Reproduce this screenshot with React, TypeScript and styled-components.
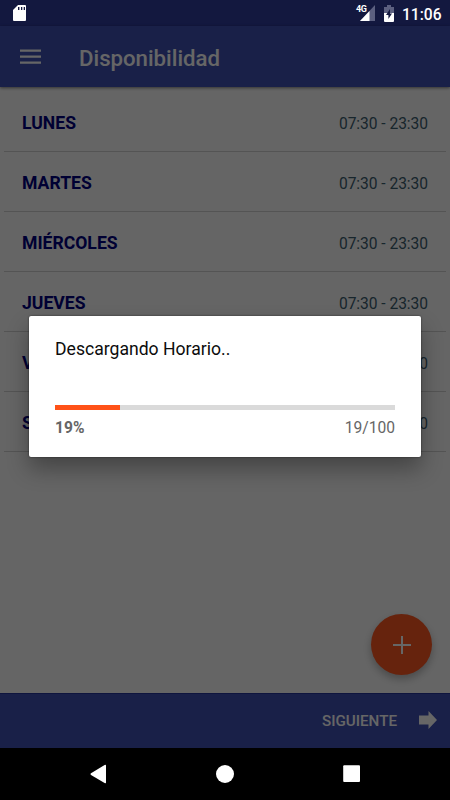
import React from "react";
import styled, { createGlobalStyle } from "styled-components";

const GlobalStyle = createGlobalStyle`
  * { box-sizing: border-box; }
  body { margin: 0; background: #000; font-family: Roboto, "Liberation Sans", sans-serif; }
`;

const Screen = styled.div`
  position: relative;
  width: 450px;
  height: 800px;
  overflow: hidden;
  display: flex;
  flex-direction: column;
`;

const StatusBackdrop = styled.div`
  height: 26px;
  flex: none;
  background: #303c9f;
`;

const AppBar = styled.header`
  height: 61px;
  flex: none;
  display: flex;
  align-items: center;
  padding: 0 20px;
  gap: 38px;
  background: #3f51b5;
  box-shadow: 0 1px 3px rgba(0, 0, 0, 0.5);
  z-index: 1;

  svg { display: block; }
`;

const Title = styled.h1`
  margin: 2px 0 0;
  font-size: 22.2px;
  font-weight: 500;
  line-height: 28px;
  color: #fff;
`;

const Schedule = styled.ul`
  flex: 1;
  margin: 0;
  padding: 5px 4px 0;
  list-style: none;
  background: #fdfdfd;
`;

const DayRow = styled.li`
  height: 60px;
  display: flex;
  align-items: center;
  justify-content: space-between;
  padding: 1px 18px 0;
  border-bottom: 1px solid #d2d2d2;
`;

const DayName = styled.span`
  padding-top: 1px;
  font-size: 17.6px;
  font-weight: 700;
  color: #000080;
`;

const Hours = styled.span`
  padding-top: 3px;
  font-size: 15.6px;
  letter-spacing: -0.05px;
  color: #3c5f70;
`;

const Fab = styled.button`
  position: absolute;
  left: 371px;
  top: 614px;
  width: 61px;
  height: 61px;
  padding: 0;
  border: 0;
  border-radius: 50%;
  background: #ff5722;
  box-shadow: 0 4px 8px rgba(0, 0, 0, 0.28);
  display: flex;
  align-items: center;
  justify-content: center;
`;

const BottomBar = styled.footer`
  height: 55px;
  flex: none;
  display: flex;
  align-items: center;
  justify-content: flex-end;
  gap: 22px;
  padding-right: 13px;
  background: #3f51b5;
  border-top: 1px solid #26369c;

  svg { margin-bottom: 2px; }
`;

const NextLabel = styled.span`
  font-size: 15.2px;
  font-weight: 500;
  color: #fff;
`;

const NavBar = styled.nav`
  height: 52px;
  flex: none;
  background: #000;

  svg { display: block; }
`;

const Scrim = styled.div`
  position: absolute;
  inset: 0 0 52px;
  background: rgba(0, 0, 0, 0.6);
  z-index: 2;
`;

const StatusIcons = styled.div`
  position: absolute;
  inset: 0 0 auto;
  z-index: 3;
  height: 26px;
  display: flex;
  align-items: center;
  padding: 0 9px 0 13px;
  color: #fff;

  svg { display: block; flex: none; }
`;

const Signals = styled.div`
  margin-left: auto;
  display: flex;
  align-items: center;
`;

const NetworkType = styled.span`
  align-self: flex-start;
  width: 10px;
  margin: 2px -6px 0 0;
  font-size: 9px;
  font-weight: 700;
  line-height: 10px;
  letter-spacing: -0.4px;
  z-index: 1;
`;

const BatteryIcon = styled.svg`
  margin-left: 9px;
`;

const Clock = styled.span`
  width: 39px;
  margin: 3px 0 0 8px;
  font-size: 15.6px;
  font-weight: 500;
  line-height: 20px;
  white-space: nowrap;
`;

const Dialog = styled.section`
  position: absolute;
  left: 29px;
  top: 316px;
  width: 392px;
  height: 141px;
  z-index: 4;
  padding: 21px 26px 0;
  display: flex;
  flex-direction: column;
  background: #fff;
  border-radius: 2px;
  box-shadow: 0 0 2px rgba(0, 0, 0, 0.6), 0 12px 22px rgba(0, 0, 0, 0.32);
`;

const Message = styled.p`
  margin: 0;
  font-size: 17.6px;
  line-height: 24px;
  color: #0c0c0c;
`;

const Track = styled.div`
  flex: none;
  height: 5px;
  margin-top: 44px;
  background: #dadada;
`;

const Fill = styled.div`
  height: 100%;
  background: #ff5218;
`;

const Figures = styled.div`
  display: flex;
  justify-content: space-between;
  margin-top: 8px;
  font-size: 15.6px;
  line-height: 20px;
  color: #666;
`;

const Percent = styled.span`
  font-weight: 700;
`;

const days = ["LUNES", "MARTES", "MIÉRCOLES", "JUEVES", "VIERNES", "SÁBADO"];
const progress = 19;

export default function App() {
  return (
    <>
      <GlobalStyle />
      <Screen>
        <StatusBackdrop />
        <AppBar>
          <svg width="21" height="16" viewBox="0 0 21 16" fill="#fff">
            <path d="M0 .4h21v2.3H0zM0 6.4h21v2.3H0zM0 12.4h21v2.3H0z" />
          </svg>
          <Title>Disponibilidad</Title>
        </AppBar>
        <Schedule>
          {days.map((day) => (
            <DayRow key={day}>
              <DayName>{day}</DayName>
              <Hours>07:30 - 23:30</Hours>
            </DayRow>
          ))}
        </Schedule>
        <Fab aria-label="Agregar">
          <svg width="18" height="18" viewBox="0 0 18 18" fill="#fff">
            <path d="M8 0h2v8h8v2h-8v8H8v-8H0V8h8z" />
          </svg>
        </Fab>
        <BottomBar>
          <NextLabel>SIGUIENTE</NextLabel>
          <svg width="18" height="18" viewBox="0 0 18 18" fill="#fff">
            <path d="M0 4.5h9.5V0L18 9l-8.5 9v-4.5H0z" />
          </svg>
        </BottomBar>
        <NavBar>
          <svg width="450" height="52" viewBox="0 0 450 52" fill="#fff">
            <path d="M104.6 17q1.4-.8 1.4.5v17q0 1.3-1.4.5L91 26.9q-1.2-.8 0-1.6z" />
            <circle cx="225" cy="26" r="9" />
            <rect x="343.2" y="17.2" width="16.8" height="16.8" rx="1" />
          </svg>
        </NavBar>
        <Scrim />
        <StatusIcons>
          <svg width="14" height="18" viewBox="0 0 14 18">
            <path d="M5 1h7q1 0 1 1v14q0 1-1 1H1q-1 0-1-1V6z" fill="#fff" />
            <path d="M5 3h1.4v3H5zM8 3h1.3v3H8zM10.7 3H12v3h-1.3z" fill="#141940" />
          </svg>
          <Signals>
            <NetworkType>4G</NetworkType>
            <svg width="15" height="16" viewBox="0 0 15 16">
              <path d="M15 0v16H0z" fill="#5c6080" />
              <path d="M9.5 5.9V16H0z" fill="#fff" />
            </svg>
            <BatteryIcon width="10" height="17" viewBox="0 0 10 17">
              <path d="M3 0h4v2h3v7H0V2h3z" fill="#5c6080" />
              <path d="M0 8h10v8q0 1-1 1H1q-1 0-1-1z" fill="#fff" />
              <path d="M6 4 2 10h2.4v4L8 8.5H6z" fill="#141940" />
            </BatteryIcon>
            <Clock>11:06</Clock>
          </Signals>
        </StatusIcons>
        <Dialog role="dialog">
          <Message>Descargando Horario..</Message>
          <Track>
            <Fill style={{ width: `${progress}%` }} />
          </Track>
          <Figures>
            <Percent>{progress}%</Percent>
            <span>{progress}/100</span>
          </Figures>
        </Dialog>
      </Screen>
    </>
  );
}
